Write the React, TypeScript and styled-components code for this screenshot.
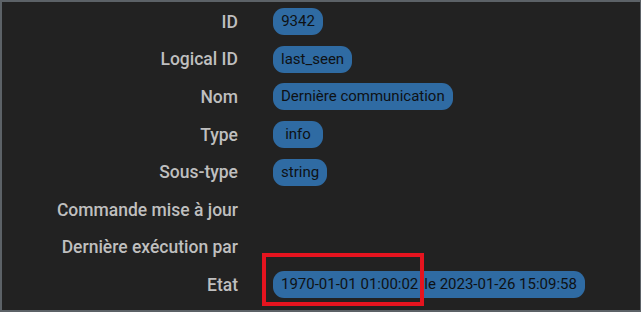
import React from "react";
import styled, { createGlobalStyle } from "styled-components";

// fiche d'une commande (vue en mode sombre)

type Field = { label: string; value?: string; extra?: string; highlight?: boolean };

const fields: Field[] = [
  { label: "ID", value: "9342" },
  { label: "Logical ID", value: "last_seen" },
  { label: "Nom", value: "Dernière communication" },
  { label: "Type", value: "info" },
  { label: "Sous-type", value: "string" },
  { label: "Commande mise à jour" },
  { label: "Dernière exécution par" },
  { label: "Etat", value: "1970-01-01 01:00:02", extra: "le 2023-01-26 15:09:58", highlight: true },
];

const GlobalStyle = createGlobalStyle`
  html, body {
    margin: 0;
    padding: 0;
    background: #222222;
  }
  body {
    font-family: Roboto, "Liberation Sans", sans-serif;
  }
`;

const Frame = styled.div`
  box-sizing: border-box;
  width: 641px;
  height: 312px;
  border: 2px solid #5c6267;
  border-right-width: 1px;
  background: #222222;
  padding-top: 1px;
  overflow: hidden;
`;

const Form = styled.div`
  display: grid;
  grid-template-columns: 236px 1fr;
  column-gap: 35px;
  grid-auto-rows: 37.6px;
  align-items: center;
`;

const Label = styled.div`
  text-align: right;
  color: #bfbfbf;
  font-size: 17.5px;
  font-weight: 500;
  white-space: nowrap;
`;

const Cell = styled.div`
  position: relative;
  display: flex;
  align-items: center;
  height: 100%;
`;

const Badge = styled.span`
  display: inline-block;
  box-sizing: border-box;
  min-width: 50px;
  height: 27px;
  line-height: 27px;
  padding: 0 8px;
  border-radius: 11px;
  background: #2f6ba3;
  color: #0e1114;
  font-size: 15px;
  text-align: center;
  white-space: nowrap;
`;

const Extra = styled.span`
  margin-left: 6px;
`;

const Marker = styled.div`
  position: absolute;
  left: -11px;
  top: -13px;
  width: 162px;
  height: 53px;
  box-sizing: border-box;
  border: 4px solid #e5141f;
  pointer-events: none;
`;

export default function App() {
  return (
    <>
      <GlobalStyle />
      <Frame>
        <Form>
          {fields.map((f) => (
            <React.Fragment key={f.label}>
              <Label>{f.label}</Label>
              <Cell>
                {f.value && (
                  <Badge>
                    {f.value}
                    {f.extra && <Extra>{f.extra}</Extra>}
                  </Badge>
                )}
                {f.highlight && <Marker />}
              </Cell>
            </React.Fragment>
          ))}
        </Form>
      </Frame>
    </>
  );
}
